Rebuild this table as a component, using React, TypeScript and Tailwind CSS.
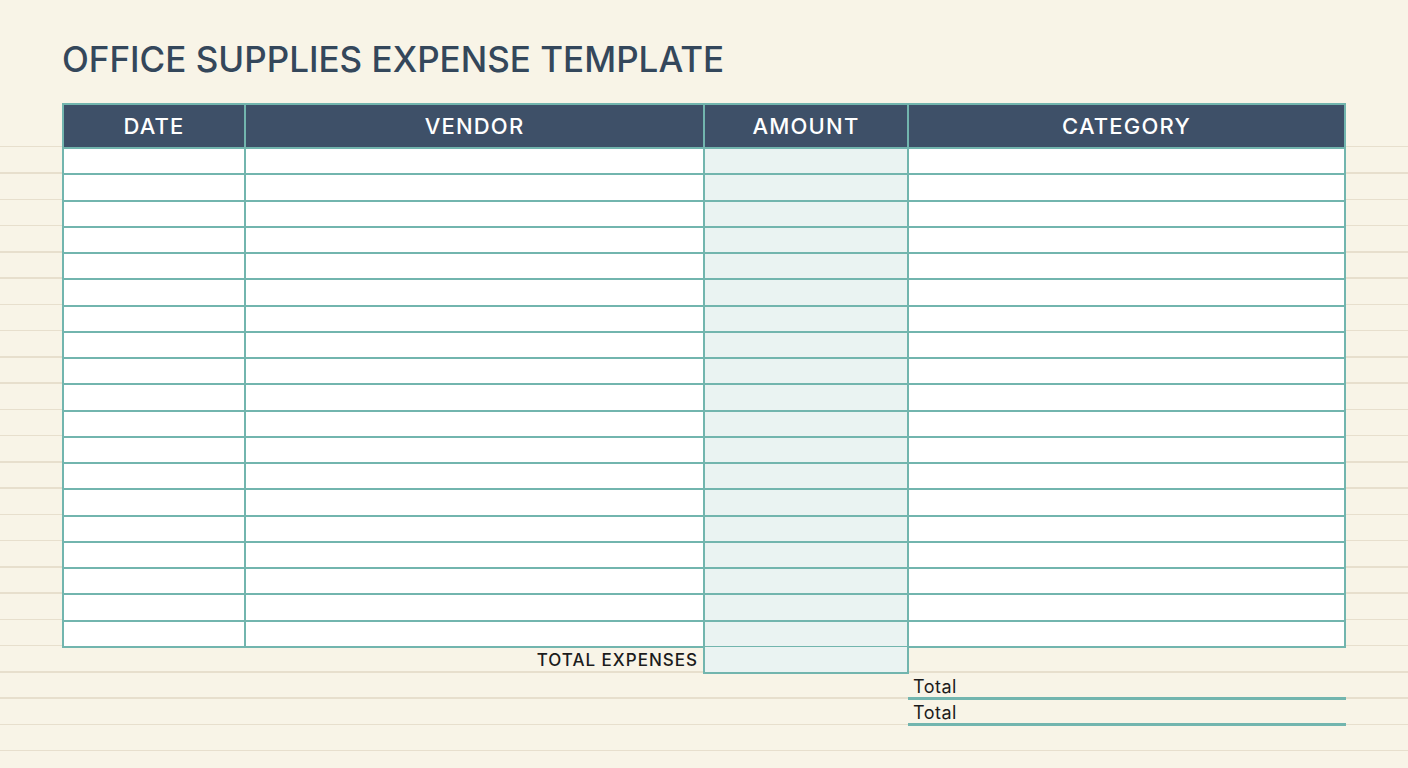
import React from 'react';

const rows = Array.from({ length: 19 }, (_, i) => i);

const columns = [
  { label: 'DATE', width: 'w-[182px]' },
  { label: 'VENDOR', width: 'w-[459px]' },
  { label: 'AMOUNT', width: 'w-[204px]' },
  { label: 'CATEGORY', width: 'w-[437px]' },
];

export default function App() {
  return (
    <div
      className="min-h-screen w-full bg-[#f8f4e7] [background-image:linear-gradient(#f8f4e7,#f8f4e7),repeating-linear-gradient(to_bottom,#e7dfcd_0px,#e7dfcd_1.5px,transparent_1.5px,transparent_26.26px)] [background-size:100%_145px,100%_100%] [background-position:0_0,0_146px] [background-repeat:no-repeat,repeat-y]"
      style={{ fontFamily: 'Inter, "Noto Sans", sans-serif' }}
    >
      <div className="pl-[62px] pt-[40px]">
        {/* Title */}
        <h1 className="text-[35px] font-medium leading-[38px] text-[#34475b]">
          OFFICE SUPPLIES EXPENSE TEMPLATE
        </h1>

        {/* Main table */}
        <table className="mt-[25px] table-fixed border-collapse border-2 border-[#72b5ae]">
          <thead>
            <tr className="h-[44px] bg-[#3e5068]">
              {columns.map((col) => (
                <th
                  key={col.label}
                  className={`${col.width} border-2 border-[#72b5ae] text-center text-[22px] font-medium tracking-[1.2px] text-white`}
                >
                  {col.label}
                </th>
              ))}
            </tr>
          </thead>
          <tbody>
            {rows.map((r) => (
              <tr key={r} className="h-[26.26px]">
                <td className="border-2 border-[#72b5ae] bg-white" />
                <td className="border-2 border-[#72b5ae] bg-white" />
                <td className="border-2 border-[#72b5ae] bg-[#eaf3f2]" />
                <td className="border-2 border-[#72b5ae] bg-white" />
              </tr>
            ))}
          </tbody>
        </table>

        {/* Totals */}
        <div className="flex">
          <div className="flex h-[26px] w-[641px] items-center justify-end pr-[5px] text-[17px] font-medium tracking-[1px] text-[#1c1c1c]">
            TOTAL EXPENSES
          </div>
          <div className="-mt-[1px] h-[27px] w-[206px] border-2 border-t-0 border-[#72b5ae] bg-[#eaf3f2]" />
        </div>
        <div className="ml-[846px] w-[438px]">
          <div className="flex h-[26px] items-end border-b-[3px] border-[#72b5ae] pb-[1px] pl-[5px] text-[18px] leading-none tracking-[0.5px] text-[#1c1c1c]">
            Total
          </div>
          <div className="flex h-[26px] items-end border-b-[3px] border-[#72b5ae] pb-[1px] pl-[5px] text-[18px] leading-none tracking-[0.5px] text-[#1c1c1c]">
            Total
          </div>
        </div>
      </div>
    </div>
  );
}
